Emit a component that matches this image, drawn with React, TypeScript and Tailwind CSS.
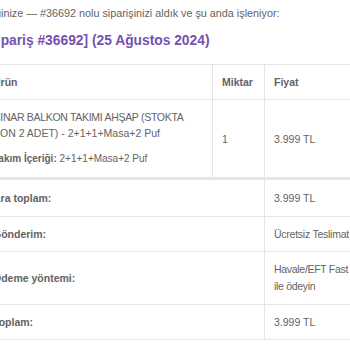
export default function App() {
  const cell = "border border-[#e5e5e5] px-[9px] py-[9px] text-left align-middle"

  return (
    <div className="w-[350px] h-[350px] overflow-hidden bg-white">
      <div className="ml-[-17px] w-[389px] font-['Liberation_Sans',Arial,sans-serif] text-[10.5px] leading-[16px] text-[#636363]">
        <p className="pt-[5px] text-[10.8px]">Bilginize — #36692 nolu siparişinizi aldık ve şu anda işleniyor:</p>

        <h2 className="mt-[11px] text-[13.8px] leading-[17px] font-bold text-[#7552b0]">
          [Sipariş #36692] (25 Ağustos 2024)
        </h2>

        <table className="mt-[15px] w-[389px] table-fixed border-collapse">
          <colgroup>
            <col className="w-[229px]" />
            <col className="w-[52px]" />
            <col className="w-[108px]" />
          </colgroup>
          <thead>
            <tr>
              <th className={`${cell} font-bold`}>Ürün</th>
              <th className={`${cell} font-bold`}>Miktar</th>
              <th className={`${cell} font-bold`}>Fiyat</th>
            </tr>
          </thead>
          <tbody>
            <tr>
              <td className={`${cell} pb-[10px]`}>
                <div>
                  <span className="tracking-[-0.3px]">ÇINAR BALKON TAKIMI AHŞAP (STOKTA</span>
                  <br />
                  SON 2 ADET) - 2+1+1+Masa+2 Puf
                </div>
                <div className="mt-[10px] text-[10px]">
                  <span className="font-bold">Takım İçeriği:</span> 2+1+1+Masa+2 Puf
                </div>
              </td>
              <td className={cell}>1</td>
              <td className={cell}>3.999 TL</td>
            </tr>
          </tbody>
          <tfoot>
            <tr>
              <th colSpan={2} className={`${cell} border-t-[3px] pt-[10px] pb-[10px] font-bold`}>Ara toplam:</th>
              <td className={`${cell} border-t-[3px] pt-[10px] pb-[10px]`}>3.999 TL</td>
            </tr>
            <tr>
              <th colSpan={2} className={`${cell} font-bold`}>Gönderim:</th>
              <td className={`${cell} whitespace-nowrap tracking-[-0.25px]`}>Ücretsiz Teslimat</td>
            </tr>
            <tr>
              <th colSpan={2} className={`${cell} font-bold`}>Ödeme yöntemi:</th>
              <td className={`${cell} leading-[17px] tracking-[-0.3px]`}>
                <span className="whitespace-nowrap">Havale/EFT Fast</span>
                <br />
                ile ödeyin
              </td>
            </tr>
            <tr>
              <th colSpan={2} className={`${cell} font-bold`}>Toplam:</th>
              <td className={cell}>3.999 TL</td>
            </tr>
          </tfoot>
        </table>
      </div>
    </div>
  )
}
